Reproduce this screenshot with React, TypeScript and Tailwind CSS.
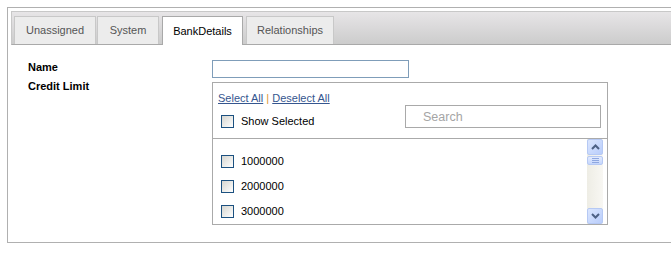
const Check = () => (
  <span className="inline-block w-[13px] h-[13px] shrink-0 border border-[#1c5180] bg-linear-to-br from-[#d6d6d0] to-white" />
);

const Tab = ({ label, active, className }: { label: string; active?: boolean; className: string }) => (
  <div
    className={
      active
        ? `h-[29px] -mb-px flex items-center justify-center bg-white border border-b-0 border-[#a9a9a9] text-black ${className}`
        : `h-[28px] flex items-center justify-center bg-[#ececec] border border-b-0 border-[#c8c8c8] text-[#555] ${className}`
    }
  >
    {label}
  </div>
);

const ScrollBar = () => (
  <div className="w-[16px] mr-[4px] flex flex-col bg-linear-to-r from-[#eeede5] to-[#f8f7f3]">
    <div className="h-[16px] rounded-[2px] border border-[#b6c9f4] bg-linear-to-br from-[#dbe6fe] to-[#b9cdfb] flex items-center justify-center">
      <svg width="9" height="6" viewBox="0 0 9 6">
        <path d="M1 5 L4.5 1.5 L8 5" fill="none" stroke="#4d6185" strokeWidth="2" />
      </svg>
    </div>
    <div className="mt-[1px] h-[9px] rounded-[2px] border border-[#b6c9f4] bg-linear-to-b from-[#e3ebfe] to-[#c5d6fc] flex flex-col items-center justify-center gap-[1px]">
      <span className="block w-[7px] h-px bg-[#8ea7e0]" />
      <span className="block w-[7px] h-px bg-[#8ea7e0]" />
      <span className="block w-[7px] h-px bg-[#8ea7e0]" />
    </div>
    <div className="flex-1" />
    <div className="h-[16px] rounded-[2px] border border-[#b6c9f4] bg-linear-to-br from-[#dbe6fe] to-[#b9cdfb] flex items-center justify-center">
      <svg width="9" height="6" viewBox="0 0 9 6">
        <path d="M1 1 L4.5 4.5 L8 1" fill="none" stroke="#4d6185" strokeWidth="2" />
      </svg>
    </div>
  </div>
);

export default function App() {
  const values = ["1000000", "2000000", "3000000"];
  return (
    <div className="w-[671px] h-[254px] overflow-hidden bg-white pt-[7px] pl-[7px] font-['Liberation_Sans',Arial,sans-serif] text-[11px]">
      <div className="w-[690px] h-[236px] border border-[#b0b0b0] pt-[3px] px-[3px]">
        <div className="h-[34px] flex items-end pl-[2px] border border-[#c8c8c8] border-b-[#a9a9a9] bg-linear-to-b from-[#e7e5e7] to-[#cccccc]">
          <Tab label="Unassigned" className="w-[82px]" />
          <Tab label="System" className="w-[62px] ml-[1px]" />
          <Tab label="BankDetails" active className="w-[81px] ml-[3px]" />
          <Tab label="Relationships" className="w-[88px] ml-[3px]" />
        </div>

        <div className="pl-[17px]">
          <div className="mt-[15px] flex">
            <label className="w-[184px] font-bold leading-[14px] text-black">Name</label>
            <input type="text" className="w-[197px] h-[18px] border border-[#7f9db9] outline-none" />
          </div>

          <div className="mt-[4px] flex">
            <label className="w-[184px] -mt-[3px] font-bold leading-[14px] text-black">Credit Limit</label>
            <div className="w-[396px] h-[143px] border border-[#aaa] flex flex-col">
              <div className="h-[57px] border-b border-[#aaa] flex flex-col">
                <div className="pt-[9px] pl-[5px] leading-[13px]">
                  <a href="#" className="text-[#35568f] underline">Select All</a>
                  <span className="text-[#e0962f]"> | </span>
                  <a href="#" className="text-[#35568f] underline">Deselect All</a>
                </div>
                <div className="flex items-end justify-between pl-[8px] pr-[6px]">
                  <div className="flex items-center gap-[7px]">
                    <Check />
                    <span className="text-black leading-[13px]">Show Selected</span>
                  </div>
                  <input
                    type="text"
                    placeholder="Search"
                    className="w-[196px] h-[23px] border border-[#a9a9a9] pl-[17px] text-[12.5px] placeholder:text-[#a5a5a5] outline-none"
                  />
                </div>
              </div>
              <div className="flex-1 flex">
                <div className="flex-1 pt-[10px] pl-[8px]">
                  {values.map((v) => (
                    <div key={v} className="h-[25px] flex items-center gap-[7px]">
                      <Check />
                      <span className="text-black">{v}</span>
                    </div>
                  ))}
                </div>
                <ScrollBar />
              </div>
            </div>
          </div>
        </div>
      </div>
    </div>
  );
}
